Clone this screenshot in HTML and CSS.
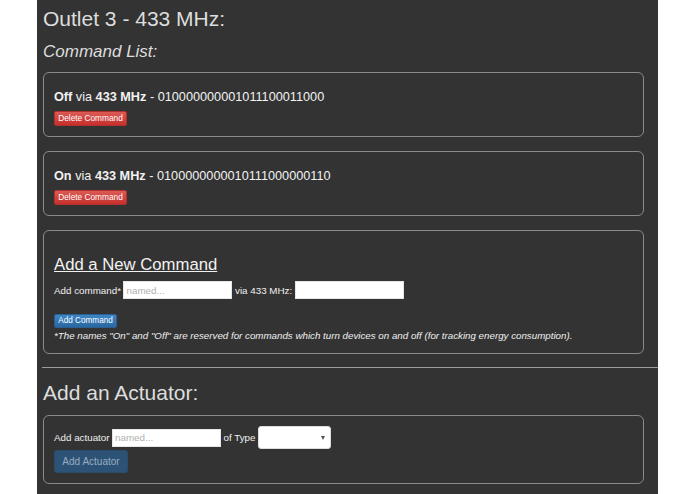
FILE: index.html
```html
<!DOCTYPE html>
<html>
<head>
<meta charset="utf-8">
<link rel="stylesheet" href="styles.css">
</head>
<body>
<div class="page">
  <h3 class="title">Outlet 3 - 433 MHz:</h3>
  <h4 class="sub">Command List:</h4>

  <div class="card">
    <p class="cmd"><b>Off</b> via <b>433 MHz</b> - 010000000001011100011000</p>
    <button class="btn btn-del">Delete Command</button>
  </div>

  <div class="card card-gap">
    <p class="cmd"><b>On</b> via <b>433 MHz</b> - 0100000000010111000000110</p>
    <button class="btn btn-del">Delete Command</button>
  </div>

  <div class="card card-gap card-new">
    <h4 class="new-title">Add a New Command</h4>
    <div class="row row-cmd">
      <span>Add command*</span>
      <input class="field" type="text" placeholder="named...">
      <span>via 433 MHz:</span>
      <input class="field" type="text">
    </div>
    <button class="btn btn-add">Add Command</button>
    <p class="note">*The names "On" and "Off" are reserved for commands which turn devices on and off (for tracking energy consumption).</p>
  </div>

  <div class="divider"></div>

  <h3 class="title title-act">Add an Actuator:</h3>

  <div class="card card-act">
    <div class="row row-act">
      <span>Add actuator</span>
      <input class="field" type="text" placeholder="named...">
      <span>of Type</span>
      <span class="select-wrap"><select class="select"><option></option></select></span>
    </div>
    <button class="btn btn-actuator">Add Actuator</button>
  </div>
</div>
</body>
</html>
```

FILE: styles.css
```css
html, body {
  margin: 0;
  padding: 0;
  background: #ffffff;
}

body {
  font-family: "Liberation Sans", Arial, Helvetica, sans-serif;
  color: #eeeeee;
}

.page {
  margin-left: 37px;
  width: 621px;
  min-height: 494px;
  background: #333333;
  padding: 0 0 1px 6px;
  box-sizing: border-box;
}

.title {
  margin: 0;
  padding-top: 7px;
  font-size: 21px;
  line-height: 24px;
  font-weight: normal;
  color: #dddddd;
}

.sub {
  margin: 11px 0 0;
  font-size: 17px;
  line-height: 20px;
  font-weight: normal;
  font-style: italic;
  color: #dddddd;
}

.card {
  margin: 10px 14px 0 0;
  border: 1px solid #8a8a8a;
  border-radius: 6px;
  padding: 15px 10px 10px;
}

.card-gap {
  margin-top: 14px;
}

.cmd {
  margin: 0;
  font-size: 12.7px;
  line-height: 18px;
  color: #f2f2f2;
}

.btn {
  display: block;
  font-family: "Liberation Sans", Arial, Helvetica, sans-serif;
  color: #ffffff;
  border-radius: 2px;
  padding: 0;
  cursor: pointer;
}

.btn-del {
  margin-top: 5px;
  width: 73px;
  height: 15px;
  font-size: 8.3px;
  line-height: 13px;
  background: linear-gradient(#dc5a55, #c6302c);
  border: 1px solid #b3302c;
}

.card-new {
  padding-bottom: 11px;
}

.new-title {
  margin: 9px 0 0;
  font-size: 16.7px;
  line-height: 20px;
  font-weight: normal;
  text-decoration: underline;
  color: #f2f2f2;
}

.row {
  display: flex;
  align-items: center;
  gap: 2.5px;
  font-size: 9.8px;
  color: #f0f0f0;
}

.row-cmd {
  margin-top: 6px;
  height: 18px;
}

.field {
  box-sizing: border-box;
  width: 109px;
  height: 18px;
  border: 1px solid #e6e6e6;
  background: #ffffff;
  padding: 0 2px;
  margin: 0;
  font-family: "Liberation Sans", Arial, Helvetica, sans-serif;
  font-size: 9.8px;
  color: #333333;
  outline: none;
}

.field::placeholder {
  color: #b0b0b0;
}

.btn-add {
  margin-top: 15px;
  width: 63px;
  height: 14px;
  font-size: 8.2px;
  line-height: 12px;
  background: linear-gradient(#3d86c6, #2a67a0);
  border: 1px solid #2a5f91;
}

.note {
  margin: 2px 0 0;
  font-size: 9.75px;
  line-height: 12px;
  font-style: italic;
  color: #f0f0f0;
}

.divider {
  margin: 13px 0 0 -1px;
  border-top: 1px solid #9c9c9c;
}

.title-act {
  padding-top: 13px;
}

.card-act {
  margin-top: 10px;
  padding-top: 10px;
}

.row-act {
  height: 23px;
}

.select-wrap {
  position: relative;
  display: inline-block;
}

.select {
  display: block;
  box-sizing: border-box;
  width: 73px;
  height: 23px;
  margin: 0;
  border: 1px solid #dddddd;
  border-radius: 3px;
  background: #ffffff;
  appearance: none;
  -webkit-appearance: none;
}

.select-wrap::after {
  content: "";
  position: absolute;
  right: 6px;
  top: 10px;
  border-left: 2.5px solid transparent;
  border-right: 2.5px solid transparent;
  border-top: 4px solid #555555;
}

.btn-actuator {
  margin-top: 1px;
  width: 74px;
  height: 23px;
  font-size: 10px;
  background: #2c5276;
  border: 1px solid #2a4d6e;
  border-radius: 3px;
  color: #98acc0;
}
```
